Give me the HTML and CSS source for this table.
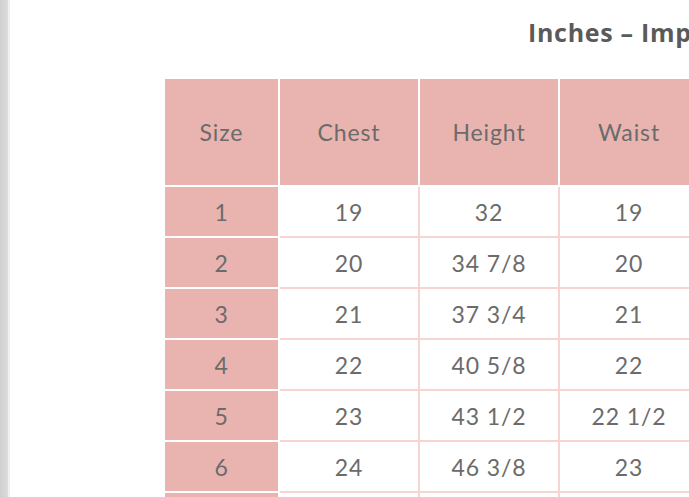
FILE: index.html
```html
<!DOCTYPE html>
<html>
<head>
<meta charset="utf-8">
<link rel="stylesheet" href="styles.css">
</head>
<body>
<div class="shell">
  <div class="gutter"></div>
  <main class="page">
    <h1 class="title">Inches – Imperial</h1>
    <table class="chart">
      <colgroup>
        <col class="col-size"><col class="col-data"><col class="col-data"><col class="col-data">
      </colgroup>
      <thead>
        <tr><th class="c-size">Size</th><th>Chest</th><th>Height</th><th>Waist</th></tr>
      </thead>
      <tbody>
        <tr><th class="c-size">1</th><td>19</td><td>32</td><td>19</td></tr>
        <tr><th class="c-size">2</th><td>20</td><td>34 7/8</td><td>20</td></tr>
        <tr><th class="c-size">3</th><td>21</td><td>37 3/4</td><td>21</td></tr>
        <tr><th class="c-size">4</th><td>22</td><td>40 5/8</td><td>22</td></tr>
        <tr><th class="c-size">5</th><td>23</td><td>43 1/2</td><td>22 1/2</td></tr>
        <tr><th class="c-size">6</th><td>24</td><td>46 3/8</td><td>23</td></tr>
        <tr><th class="c-size"></th><td></td><td></td><td></td></tr>
      </tbody>
    </table>
  </main>
</div>
</body>
</html>
```

FILE: styles.css
```css
html, body {
  margin: 0;
  padding: 0;
  background: #ffffff;
  overflow: hidden;
  width: 689px;
  height: 497px;
}

.shell {
  display: flex;
  height: 497px;
}

.gutter {
  flex: 0 0 8px;
  background: linear-gradient(to right, #cfcfcf, #dddddd);
  border-right: 2px solid #efefef;
}

.page {
  flex: 1 1 auto;
  min-width: 0;
  overflow: hidden;
  background: #ffffff;
}

.title {
  margin: 15px 0 0 518px;
  font-family: "Open Sans", "Liberation Sans", sans-serif;
  font-weight: 700;
  font-size: 25px;
  line-height: 34px;
  letter-spacing: 0.7px;
  color: #5a5a5a;
  white-space: nowrap;
}

.chart {
  margin: 30px 0 0 155px;
  width: 535px;
  min-width: 535px;
  border-collapse: separate;
  border-spacing: 0;
  table-layout: fixed;
  font-family: Lato, "Liberation Sans", sans-serif;
  font-size: 23px;
  color: #6b6b6b;
}

.col-size { width: 115px; }
.col-data { width: 140px; }

.chart th,
.chart td {
  padding: 0;
  text-align: center;
  font-weight: 400;
  height: 49px;
  border-right: 2px solid #f6d4d1;
  border-bottom: 2px solid #f6d4d1;
  letter-spacing: 0.9px;
  white-space: nowrap;
}

.chart thead th {
  height: 106px;
  background: #e9b4b0;
  border-right-color: #ffffff;
  border-bottom-color: #ffffff;
}

.chart .c-size {
  background: #e9b4b0;
  border-right-color: #ffffff;
  border-bottom-color: #ffffff;
}
```
